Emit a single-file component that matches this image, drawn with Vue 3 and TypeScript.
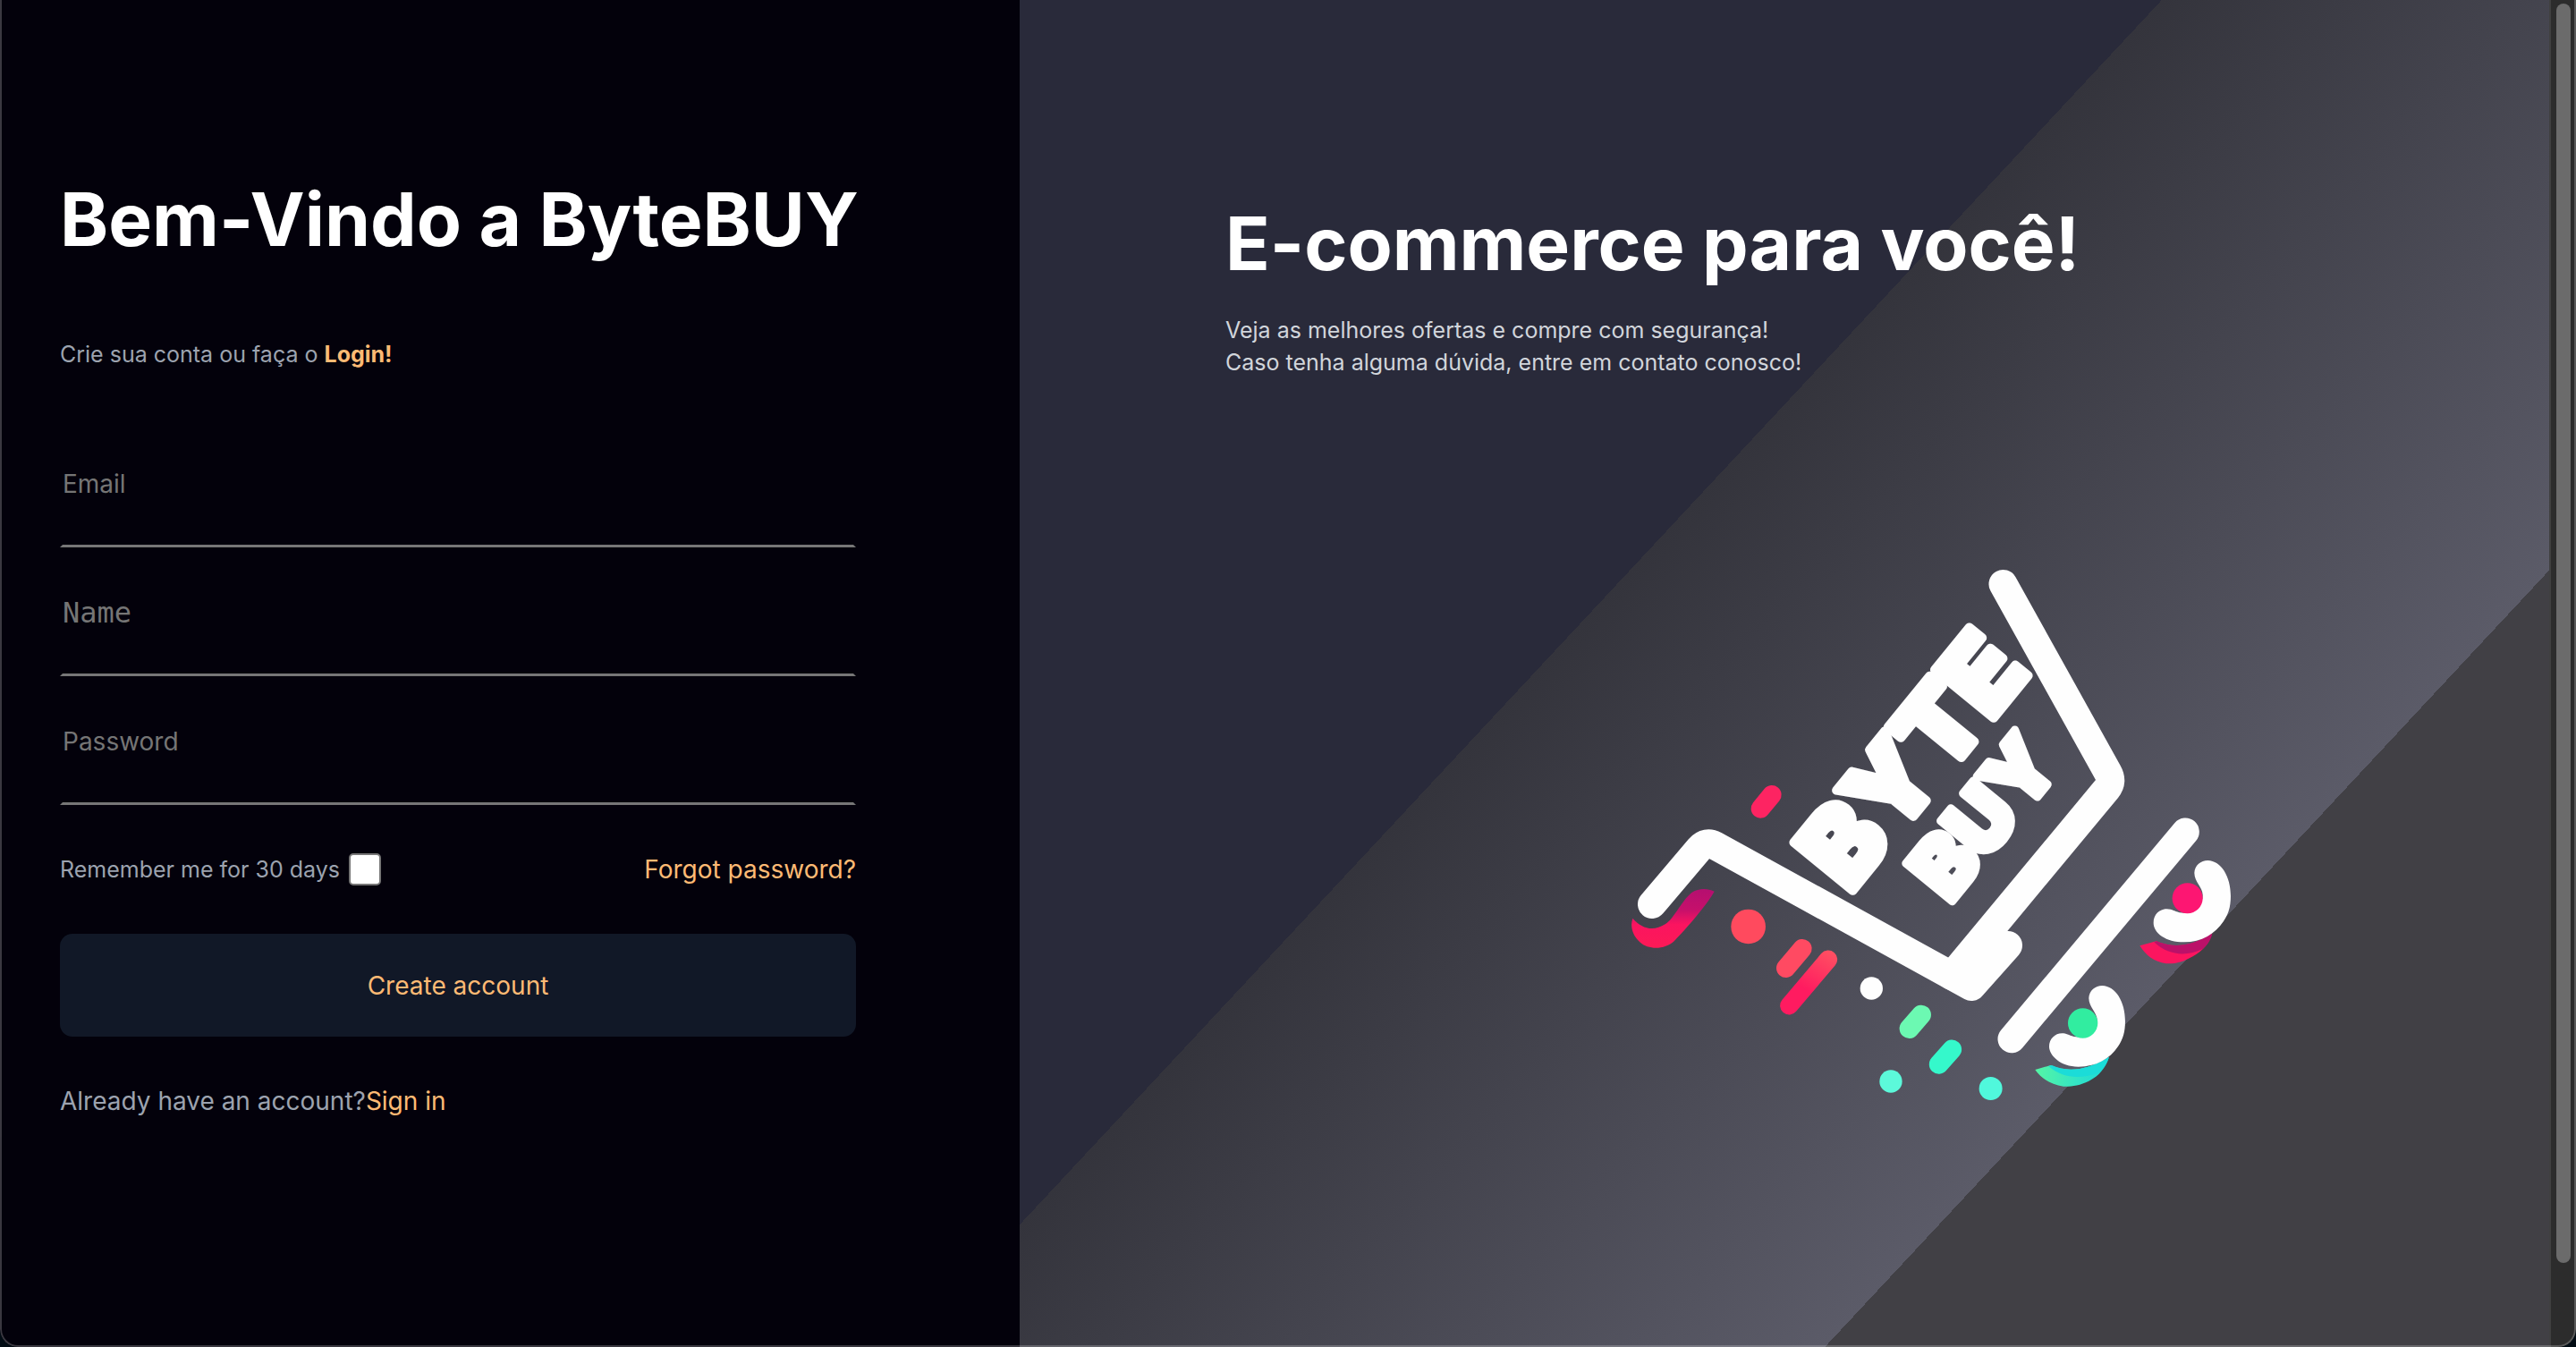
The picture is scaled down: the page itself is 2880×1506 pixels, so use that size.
<script setup lang="ts">
import { ref } from 'vue'

interface Field {
  id: string
  label: string
  type: string
}

const fields: Field[] = [
  { id: 'email', label: 'Email', type: 'email' },
  { id: 'name', label: 'Name', type: 'text' },
  { id: 'password', label: 'Password', type: 'password' },
]

const values = ref<Record<string, string>>({ email: '', name: '', password: '' })
const remember = ref(false)
</script>

<template>
  <div class="window">
    <main class="signup">
      <h1 class="headline">Bem-Vindo a ByteBUY</h1>
      <p class="intro">Crie sua conta ou faça o <a class="strong" href="#login">Login!</a></p>
      <form @submit.prevent>
        <div class="fields">
          <input
            v-for="field in fields"
            :key="field.id"
            v-model="values[field.id]"
            class="field"
            :class="field.id"
            :type="field.type"
            :placeholder="field.label"
            :aria-label="field.label"
          />
        </div>
        <div class="options">
          <label class="remember" for="remember">Remember me for 30 days</label>
          <input id="remember" v-model="remember" class="check" type="checkbox" />
          <a class="forgot" href="#forgot">Forgot password?</a>
        </div>
        <button class="submit" type="submit">Create account</button>
      </form>
      <p class="signin">Already have an account?<a href="#signin">Sign in</a></p>
    </main>

    <section class="promo">
      <h2 class="headline">E-commerce para você!</h2>
      <p class="pitch">
        Veja as melhores ofertas e compre com segurança!<br />
        Caso tenha alguma dúvida, entre em contato conosco!
      </p>
      <svg class="logo" viewBox="0 0 720 640" role="img" aria-label="Byte Buy">
        <defs>
          <linearGradient id="pink" x1="0" y1="0" x2="0" y2="1">
            <stop offset="0" stop-color="#b50f70" />
            <stop offset="0.35" stop-color="#c5106b" />
            <stop offset="0.6" stop-color="#fb1460" />
            <stop offset="1" stop-color="#fc1a56" />
          </linearGradient>
          <linearGradient id="coral" gradientUnits="userSpaceOnUse" x1="732" y1="668" x2="601" y2="883">
            <stop offset="0" stop-color="#ff4f62" />
            <stop offset="0.6" stop-color="#ff1b60" />
          </linearGradient>
          <linearGradient id="mint" x1="0" y1="0" x2="1" y2="0">
            <stop offset="0" stop-color="#55f5a5" />
            <stop offset="1" stop-color="#19d8dd" />
          </linearGradient>
        </defs>

        <!-- basket -->
        <g fill="none" stroke="#fefefe" stroke-width="32" stroke-linecap="round" stroke-linejoin="round">
          <path d="M47 391 L100 328.500 Q107.500 320 117.500 325.300 L404 483 L445 437" />
          <path d="M382 471 L555.700 261.700 Q562.300 253.700 556.700 243.700 L439.500 33" />
          <path d="M643.300 310 L449 541.700" stroke-width="31" />
        </g>

        <!-- wordmark -->
        <g class="wordmark">
          <text transform="translate(268 380) rotate(-50.800)" font-size="117" stroke-width="10">BYTE</text>
          <text transform="translate(380 391) rotate(-50.800)" font-size="92" stroke-width="9">BUY</text>
        </g>

        <!-- splashes on the left -->
        <g transform="translate(0 220) scale(.3333)" fill="none" stroke-linecap="round">
          <path
            fill="url(#pink)"
            d="M76 560 C105 594 145 606 185 580 C215 562 240 500 275 473 C297 460 325 458 350 470 C325 514 265 585 215 637 C185 665 130 668 100 640 C75 617 67 588 76 560Z"
          />
          <path d="M543 146 L505 192" stroke="#fd2462" stroke-width="64" />
          <circle cx="464" cy="588" r="58" fill="#ff4a5e" />
          <path d="M645 662 L590 727" stroke="#ff4a62" stroke-width="64" />
          <path d="M732 698 L601 853" stroke="url(#coral)" stroke-width="61" />
          <circle cx="877" cy="795" r="38" fill="#fefefe" />
          <path d="M1044 884 L1004 930" stroke="#6cf9b2" stroke-width="66" />
          <path d="M1147 1000 L1103 1050" stroke="#35f8cb" stroke-width="65" />
          <circle cx="942" cy="1107" r="38" fill="#5cf9da" />
          <circle cx="1277" cy="1131" r="39" fill="#50f8dc" />
        </g>

        <!-- wheels -->
        <g transform="translate(350 260) scale(.3333)">
          <path fill="#fb155f" d="M727 532 L782 517 C840 542 905 534 968 493 C962 520 940 550 905 568 C870 588 850 593 815 592 C775 586 748 565 727 532Z" />
          <path fill="#bb1169" d="M775 520 L784 517 C840 542 905 534 970 490 C968 508 955 530 938 543 C885 568 825 567 775 520Z" />
          <path fill="#fefefe" d="M910 288 C911 262 932 246 955 246 C1000 247 1032 300 1032 365 C1032 400 1025 425 1008 450 C980 492 935 520 875 520 C815 520 773 490 773 455 C773 428 792 409 818 409 C835 409 842 416 860 421 C905 428 940 405 938 360 C937 335 911 320 910 288Z" />
          <circle cx="887" cy="373" r="51" fill="#fd1672" />
        </g>
        <g transform="translate(232 400) scale(.3333)">
          <path fill="url(#mint)" d="M730 528 L782 513 C840 538 905 530 978 485 C968 520 945 548 910 566 C880 581 850 585 825 584 C785 578 752 560 730 528Z" />
          <path fill="#1bdcd8" d="M775 516 L786 513 C840 538 905 530 978 485 C970 510 955 530 938 540 C885 558 825 560 775 516Z" />
          <path fill="#fefefe" d="M910 288 C911 262 932 246 955 246 C1000 247 1032 300 1032 365 C1032 400 1025 425 1008 450 C980 492 935 518 875 518 C815 518 777 480 777 450 C777 425 797 406 820 406 C835 406 842 412 860 417 C905 424 940 405 938 360 C937 335 911 320 910 288Z" />
          <circle cx="890" cy="372" r="50" fill="#31eda0" />
        </g>
      </svg>
    </section>

    <div class="scrollbar" aria-hidden="true"><div class="thumb"></div></div>
  </div>
</template>

<style>
body {
  margin: 0;
  background: #020c14;
}
</style>

<style scoped>
.window {
  position: relative;
  display: grid;
  grid-template-columns: minmax(0, 2fr) minmax(0, 3fr) 30px;
  min-height: 100vh;
  overflow: hidden;
  border-radius: 0 0 20px 20px;
  font-family: Inter, 'Liberation Sans', sans-serif;
  font-size: 28px;
  line-height: 36px;
}

/* thin rim of the window, drawn over both panels */
.window::after {
  content: '';
  position: absolute;
  inset: 0;
  border: 2px solid rgba(255, 255, 255, 0.22);
  border-top: 0;
  border-radius: 0 0 20px 20px;
  pointer-events: none;
}

h1,
h2,
p {
  margin: 0;
}

a {
  color: #fdba74;
  text-decoration: none;
}

.signup {
  padding: 196px 183px 60px 67px;
  background: #03010b;
  color: #9ca3af;
}

.promo {
  padding: 223px 60px 60px 230px;
  background: linear-gradient(133deg, #292a3a 41%, #34343c 41%, #5b5b68 74%, #414045 74%);
}

.headline {
  color: #fff;
  font-size: 82px;
  font-weight: 700;
  line-height: 100px;
  white-space: nowrap;
}

.intro {
  margin-top: 82px;
  font-size: 25px;
}

.strong {
  font-weight: 700;
}

.fields {
  display: flex;
  flex-direction: column;
  gap: 3px;
  margin-top: 57px;
}

.field {
  box-sizing: border-box;
  width: 100%;
  height: 141px;
  padding: 0 0 2px;
  border: 3px solid transparent;
  border-bottom-color: #767676;
  outline: 0;
  background: transparent;
  color: #fff;
  font: inherit;
}

.field::placeholder {
  color: #757575;
  opacity: 1;
}

.field.name {
  font-family: 'DejaVu Sans Mono', 'Liberation Mono', monospace;
  font-size: 32px;
}

.options {
  display: flex;
  align-items: center;
  margin-top: 54px;
}

.remember {
  font-size: 25px;
}

.check {
  appearance: none;
  box-sizing: border-box;
  width: 36px;
  height: 36px;
  margin: 0 0 0 10px;
  border: 2px solid #767676;
  border-radius: 5px;
  background: #fff;
}

.check:checked {
  background: #fdba74;
}

.forgot {
  margin-left: auto;
}

.submit {
  display: block;
  width: 100%;
  height: 115px;
  margin-top: 54px;
  border: 0;
  border-radius: 14px;
  background: #111827;
  color: #fdba74;
  font: inherit;
}

.signin {
  margin-top: 54px;
}

.pitch {
  margin-top: 28px;
  color: #d1d5db;
  font-size: 25px;
}

.logo {
  display: block;
  width: 720px;
  height: 640px;
  margin: 197px 0 0 430px;
}

.wordmark {
  fill: #fefefe;
  stroke: #fefefe;
  stroke-linejoin: round;
  font-family: Inter, 'Liberation Sans', sans-serif;
  font-weight: 900;
}

.scrollbar {
  box-sizing: border-box;
  padding: 4px 6px 94px;
  border-left: 2px solid #404040;
  background: #2c2c2c;
}

.thumb {
  width: 16px;
  height: 100%;
  border-radius: 8px;
  background: #6b6b6b;
}
</style>
